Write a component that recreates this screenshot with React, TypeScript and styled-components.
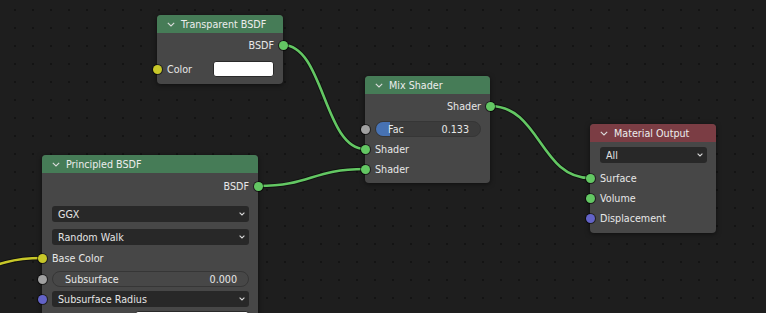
import styled, { createGlobalStyle } from 'styled-components';

const GlobalStyle = createGlobalStyle`
  html, body {
    margin: 0;
    padding: 0;
    background: #1e1e1e;
  }
`;

const SHADER = '#63c763';
const COLOR = '#c7c729';
const FLOAT = '#a1a1a1';
const VECTOR = '#6363c7';

type Wire = { from: [number, number]; to: [number, number]; color: string };

const wires: Wire[] = [
  { from: [283, 45], to: [365, 149], color: SHADER },
  { from: [258, 186], to: [365, 169], color: SHADER },
  { from: [490, 106], to: [590, 178], color: SHADER },
  { from: [-80, 285], to: [42, 258], color: COLOR },
];

function noodle({ from, to }: Wire) {
  const [x1, y1] = from;
  const [x2, y2] = to;
  const h = Math.abs(x2 - x1) * 0.5;
  return `M${x1} ${y1} C${x1 + h} ${y1} ${x2 - h} ${y2} ${x2} ${y2}`;
}

export default function App() {
  return (
    <>
      <GlobalStyle />
      <Canvas>
        <Wires width={766} height={313}>
          {wires.map((w, i) => (
            <g key={i}>
              <path d={noodle(w)} stroke="rgba(0,0,0,0.45)" strokeWidth={4.5} fill="none" />
              <path d={noodle(w)} stroke={w.color} strokeWidth={2.6} fill="none" />
            </g>
          ))}
        </Wires>

        <Node $x={157} $y={15} $w={126} $pb={5}>
          <Header>
            <Collapse />
            Transparent BSDF
          </Header>
          <Row $mt={2} $out>
            BSDF
            <Socket $c={SHADER} $side="right" />
          </Row>
          <Row $mt={4}>
            <Socket $c={COLOR} $side="left" />
            <Label>Color</Label>
            <Swatch $w={61} />
          </Row>
        </Node>

        <Node $x={365} $y={76} $w={125} $pb={4}>
          <Header>
            <Collapse />
            Mix Shader
          </Header>
          <Row $mt={2} $out>
            Shader
            <Socket $c={SHADER} $side="right" />
          </Row>
          <Row $mt={3}>
            <Socket $c={FLOAT} $side="left" />
            <Slider $dark>
              <Fill style={{ width: `${0.133 * 100}%` }} />
              <SliderText>Fac</SliderText>
              <SliderText>0.133</SliderText>
            </Slider>
          </Row>
          <Row>
            <Socket $c={SHADER} $side="left" />
            Shader
          </Row>
          <Row>
            <Socket $c={SHADER} $side="left" />
            Shader
          </Row>
        </Node>

        <Node $x={590} $y={124} $w={126} $pb={5}>
          <Header $tone="output">
            <Collapse />
            Material Output
          </Header>
          <Row $mt={3}>
            <Dropdown>
              All
              <Caret />
            </Dropdown>
          </Row>
          <Row $mt={3}>
            <Socket $c={SHADER} $side="left" />
            Surface
          </Row>
          <Row>
            <Socket $c={SHADER} $side="left" />
            Volume
          </Row>
          <Row>
            <Socket $c={VECTOR} $side="left" />
            Displacement
          </Row>
        </Node>

        <Node $x={42} $y={155} $w={216} $pb={40}>
          <Header>
            <Collapse />
            Principled BSDF
          </Header>
          <Row $mt={3} $out>
            BSDF
            <Socket $c={SHADER} $side="right" />
          </Row>
          <Row $mt={8}>
            <Dropdown>
              GGX
              <Caret />
            </Dropdown>
          </Row>
          <Row $mt={3}>
            <Dropdown>
              Random Walk
              <Caret />
            </Dropdown>
          </Row>
          <Row $mt={1}>
            <Socket $c={COLOR} $side="left" />
            Base Color
          </Row>
          <Row $mt={1}>
            <Socket $c={FLOAT} $side="left" />
            <Slider>
              <SliderText>Subsurface</SliderText>
              <SliderText>0.000</SliderText>
            </Slider>
          </Row>
          <Row>
            <Socket $c={VECTOR} $side="left" />
            <Dropdown>
              Subsurface Radius
              <Caret />
            </Dropdown>
          </Row>
          <Row>
            <Socket $c={COLOR} $side="left" />
            <Label />
            <Swatch $w={114} />
          </Row>
        </Node>
      </Canvas>
    </>
  );
}

function Collapse() {
  return (
    <svg width="8" height="5" viewBox="0 0 8 5">
      <path d="M0.8 0.8 L4 4 L7.2 0.8" stroke="#dcdcdc" strokeWidth="1.1" fill="none" />
    </svg>
  );
}

function Caret() {
  return (
    <svg width="6" height="4" viewBox="0 0 6 4">
      <path d="M0.6 0.6 L3 3 L5.4 0.6" stroke="#d8d8d8" strokeWidth="1.1" fill="none" />
    </svg>
  );
}

const Canvas = styled.div`
  position: relative;
  width: 766px;
  height: 313px;
  overflow: hidden;
  background-color: #1e1e1e;
  background-image: radial-gradient(circle, #141414 0.9px, transparent 1.4px);
  background-size: 18px 18px;
  background-position: 6px 1px;
  font-family: 'DejaVu Sans', sans-serif;
  font-size: 9.6px;
  color: #e8e8e8;
`;

const Wires = styled.svg`
  position: absolute;
  left: 0;
  top: 0;
`;

const Node = styled.div<{ $x: number; $y: number; $w: number; $pb: number }>`
  position: absolute;
  left: ${(p) => p.$x}px;
  top: ${(p) => p.$y}px;
  width: ${(p) => p.$w}px;
  padding-bottom: ${(p) => p.$pb}px;
  display: flex;
  flex-direction: column;
  background: #474747;
  border-radius: 4px;
  box-shadow: 0 1px 5px rgba(0, 0, 0, 0.55);
`;

const Header = styled.div<{ $tone?: 'shader' | 'output' }>`
  height: 18px;
  display: flex;
  align-items: center;
  gap: 6px;
  padding-left: 10px;
  border-radius: 4px 4px 0 0;
  background: ${(p) => (p.$tone === 'output' ? '#7b3d44' : '#467c57')};
  color: #ededed;
  white-space: nowrap;
`;

const Row = styled.div<{ $mt?: number; $out?: boolean }>`
  position: relative;
  height: 20px;
  margin-top: ${(p) => p.$mt ?? 0}px;
  display: flex;
  align-items: center;
  justify-content: ${(p) => (p.$out ? 'flex-end' : 'flex-start')};
  gap: 8px;
  padding: 0 9px 0 10px;
  white-space: nowrap;
`;

const Label = styled.span`
  flex: 1;
`;

const Socket = styled.span<{ $c: string; $side: 'left' | 'right' }>`
  position: absolute;
  top: 50%;
  ${(p) => p.$side}: -4.5px;
  width: 9px;
  height: 9px;
  margin-top: -4.5px;
  border-radius: 50%;
  background: ${(p) => p.$c};
  box-shadow: 0 0 0 1px rgba(0, 0, 0, 0.55);
`;

const Swatch = styled.span<{ $w: number }>`
  width: ${(p) => p.$w}px;
  height: 16px;
  box-sizing: border-box;
  background: #ffffff;
  border: 1px solid #2a2a2a;
  border-radius: 3px;
`;

const Dropdown = styled.div`
  flex: 1;
  height: 16px;
  display: flex;
  align-items: center;
  justify-content: space-between;
  padding: 0 4px 0 6px;
  background: #282828;
  border-radius: 3px;
  color: #e4e4e4;
`;

const Slider = styled.div<{ $dark?: boolean }>`
  position: relative;
  flex: 1;
  height: 16px;
  box-sizing: border-box;
  display: flex;
  align-items: center;
  justify-content: space-between;
  padding: 0 11px 0 12px;
  overflow: hidden;
  background: ${(p) => (p.$dark ? '#3c3c3c' : '#474747')};
  border: 1px solid #363636;
  border-radius: 8px;
`;

const Fill = styled.span`
  position: absolute;
  left: 0;
  top: 0;
  bottom: 0;
  background: #4772b3;
`;

const SliderText = styled.span`
  position: relative;
`;
